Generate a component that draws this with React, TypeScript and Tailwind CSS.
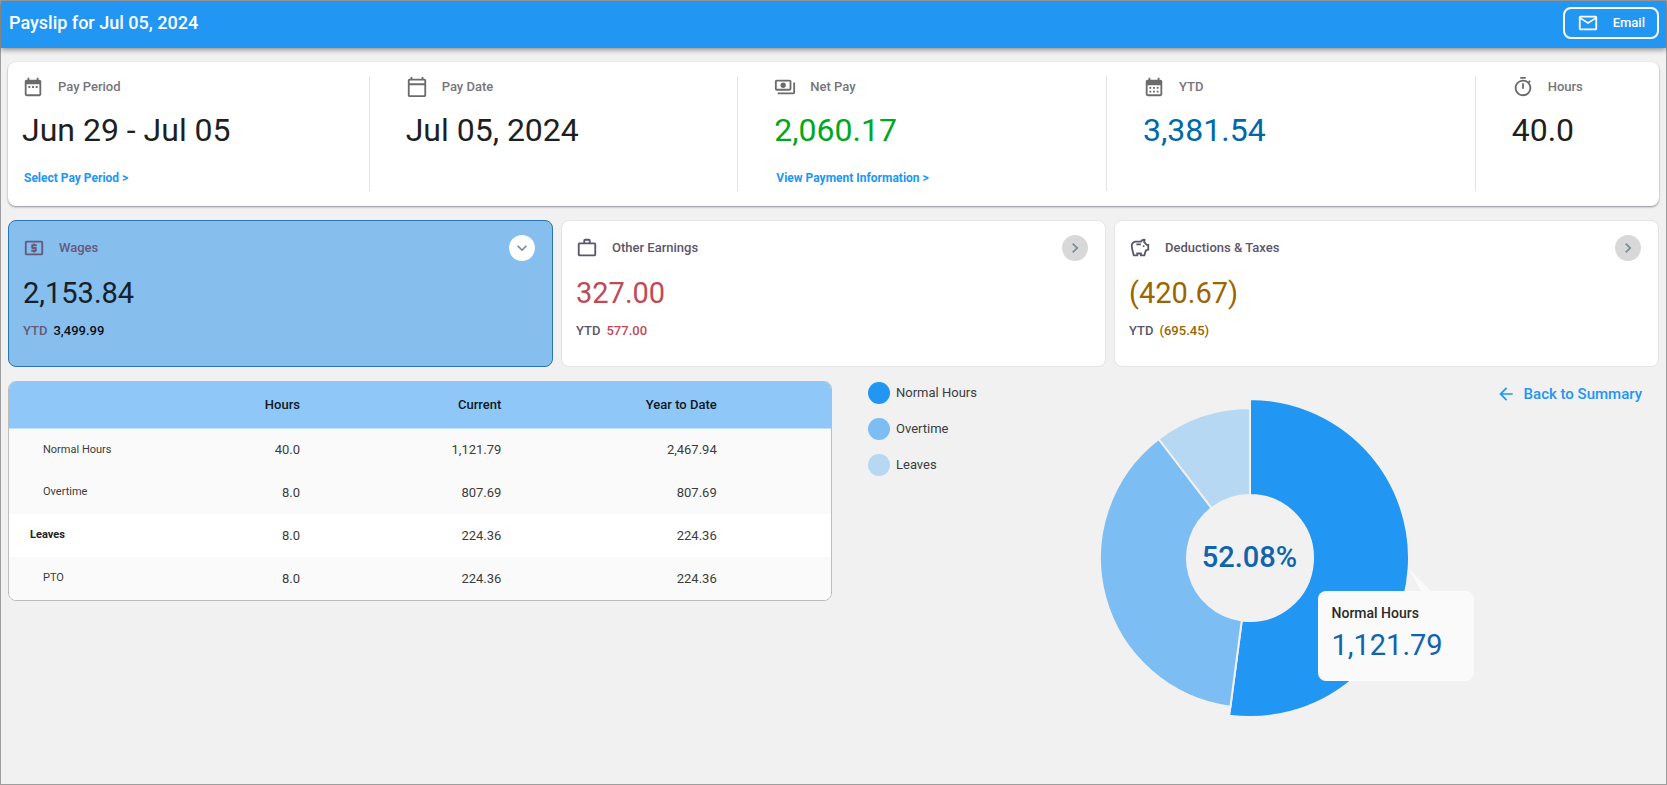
import React from 'react';
import {
  MdArrowBack,
  MdCalendarMonth,
  MdChevronRight,
  MdDateRange,
  MdExpandMore,
  MdMailOutline,
  MdOutlineCalendarToday,
  MdOutlineLocalAtm,
  MdOutlinePayments,
  MdOutlineSavings,
  MdOutlineTimer,
  MdWorkOutline
} from 'react-icons/md';

const summaryItems = [
  { icon: MdDateRange, label: 'Pay Period', value: 'Jun 29 - Jul 05', color: 'text-[#1f1f1f]', link: 'Select Pay Period >' },
  { icon: MdOutlineCalendarToday, label: 'Pay Date', value: 'Jul 05, 2024', color: 'text-[#1f1f1f]' },
  { icon: MdOutlinePayments, label: 'Net Pay', value: '2,060.17', color: 'text-[#00a81f]', link: 'View Payment Information >' },
  { icon: MdCalendarMonth, label: 'YTD', value: '3,381.54', color: 'text-[#0068a8]' },
  { icon: MdOutlineTimer, label: 'Hours', value: '40.0', color: 'text-[#1f1f1f]' }
];

const categories = [
  {
    id: 'wages',
    icon: MdOutlineLocalAtm,
    title: 'Wages',
    amount: '2,153.84',
    ytd: '3,499.99',
    amountColor: 'text-[#14202b]',
    ytdColor: 'text-[#0a0f14]'
  },
  {
    id: 'earnings',
    icon: MdWorkOutline,
    title: 'Other Earnings',
    amount: '327.00',
    ytd: '577.00',
    amountColor: 'text-[#c04a57]',
    ytdColor: 'text-[#c04a57]'
  },
  {
    id: 'deductions',
    icon: MdOutlineSavings,
    title: 'Deductions & Taxes',
    amount: '(420.67)',
    ytd: '(695.45)',
    amountColor: 'text-[#9c6500]',
    ytdColor: 'text-[#9c6500]'
  }
];

const wageRows = [
  { name: 'Normal Hours', hours: '40.0', current: '1,121.79', ytd: '2,467.94', group: false },
  { name: 'Overtime', hours: '8.0', current: '807.69', ytd: '807.69', group: false },
  { name: 'Leaves', hours: '8.0', current: '224.36', ytd: '224.36', group: true },
  { name: 'PTO', hours: '8.0', current: '224.36', ytd: '224.36', group: false }
];

const slices = [
  { name: 'Normal Hours', value: 1121.79, fill: '#2196f3', dot: 'bg-[#2196f3]', radius: 159 },
  { name: 'Overtime', value: 807.69, fill: '#7cbdf4', dot: 'bg-[#7cbdf4]', radius: 150 },
  { name: 'Leaves', value: 224.36, fill: '#b7d8f3', dot: 'bg-[#b7d8f3]', radius: 150 }
];

const INNER_RADIUS = 63;

function arcPath(start: number, end: number, outer: number) {
  const point = (angle: number, r: number) => `${r * Math.sin(angle)} ${-r * Math.cos(angle)}`;
  const large = end - start > Math.PI ? 1 : 0;
  return [
    `M${point(start, outer)}`,
    `A${outer} ${outer} 0 ${large} 1 ${point(end, outer)}`,
    `L${point(end, INNER_RADIUS)}`,
    `A${INNER_RADIUS} ${INNER_RADIUS} 0 ${large} 0 ${point(start, INNER_RADIUS)}`,
    'Z'
  ].join(' ');
}

function SummaryCard() {
  return (
    <section className="overflow-hidden rounded-lg bg-white pt-3.5 pb-[15px] shadow-[0_1px_2px_rgba(40,40,60,0.5)]">
      <div className="-ml-2 grid grid-cols-[2fr_2fr_2fr_2fr_1fr]">
        {summaryItems.map((item, index) => (
          <div
            key={item.label}
            className={`h-[115px] ${index === 0 ? 'pl-[22px]' : 'border-l border-[#e4e4e4] pl-9'}`}
          >
            <div className="flex h-[22px] items-center gap-3.5 text-[#6b6b6b]">
              <item.icon className="size-[22px]" />
              <span className="text-[13px] font-medium text-[#77747e]">{item.label}</span>
            </div>
            <p className={`mt-3 text-[32px] leading-10 ${item.color}`}>{item.value}</p>
            {item.link && (
              <a href="#" className="mt-5 ml-0.5 block text-xs font-bold text-[#2196f3]">
                {item.link}
              </a>
            )}
          </div>
        ))}
      </div>
    </section>
  );
}

type CategoryCardProps = {
  category: (typeof categories)[number];
  active: boolean;
  onSelect: () => void;
};

function CategoryCard({ category, active, onSelect }: CategoryCardProps) {
  const Chevron = active ? MdExpandMore : MdChevronRight;
  const muted = active ? 'text-[#65597a]' : 'text-[#5b566c]';

  return (
    <section
      className={`h-[147px] rounded-lg border px-3.5 pt-3.5 ${
        active ? 'border-[#2a74b3] bg-[#86beed]' : 'border-[#e4e4e4] bg-white'
      }`}
    >
      <div className={`flex items-center gap-3.5 ${muted}`}>
        <category.icon className="size-[22px]" />
        <h2 className="flex-1 text-[13px] font-medium">{category.title}</h2>
        <button
          type="button"
          onClick={onSelect}
          aria-label={`Show ${category.title}`}
          className={`mr-[3px] flex size-[26px] items-center justify-center rounded-full text-[#7b8a93] ${
            active ? 'bg-white' : 'bg-[#d8d8d8]'
          }`}
        >
          <Chevron className="size-5" />
        </button>
      </div>
      <p className={`mt-3 text-[29px] leading-10 ${category.amountColor}`}>{category.amount}</p>
      <p className={`mt-2 flex gap-1.5 text-[13px] leading-5 font-medium ${muted}`}>
        YTD <span className={category.ytdColor}>{category.ytd}</span>
      </p>
    </section>
  );
}

function WagesTable() {
  return (
    <div className="overflow-hidden rounded-lg border border-[#bdbdbd]">
      <table className="w-full table-fixed text-right text-[13px] text-[#3c3c3c]">
        <colgroup>
          <col className="w-[22.4%]" />
          <col className="w-[13%]" />
          <col className="w-[24.5%]" />
          <col className="w-[26.2%]" />
          <col />
        </colgroup>
        <thead>
          <tr className="h-[46px] border-b border-[#c4e0f8] bg-[#8fc8f8] text-[#10181f]">
            <th aria-label="Type" />
            <th className="font-medium">Hours</th>
            <th className="font-medium">Current</th>
            <th className="font-medium">Year to Date</th>
            <th aria-hidden="true" />
          </tr>
        </thead>
        <tbody>
          {wageRows.map((row) => (
            <tr key={row.name} className={`h-[43px] ${row.group ? 'bg-white' : 'bg-[#fafafa]'}`}>
              <th
                scope="row"
                className={`text-left text-[11px] ${
                  row.group ? 'pl-[21px] font-bold text-[#222222]' : 'pl-[34px] font-normal'
                }`}
              >
                {row.name}
              </th>
              <td>{row.hours}</td>
              <td>{row.current}</td>
              <td>{row.ytd}</td>
              <td />
            </tr>
          ))}
        </tbody>
      </table>
    </div>
  );
}

function Donut() {
  const total = slices.reduce((sum, slice) => sum + slice.value, 0);
  let angle = 0;

  return (
    <div className="relative mt-[17px] size-[320px]">
      <svg viewBox="-160 -160 320 320" className="size-full" role="img" aria-label="Wages breakdown">
        {slices.map((slice) => {
          const start = angle;
          angle += (slice.value / total) * Math.PI * 2;
          return (
            <path
              key={slice.name}
              d={arcPath(start, angle, slice.radius)}
              fill={slice.fill}
              stroke="#f1f1f1"
              strokeWidth="2"
            />
          );
        })}
      </svg>
      <div className="absolute inset-0 flex items-center justify-center text-[29px] font-medium text-[#0f64ad]">
        52.08%
      </div>

      {/* Tooltip */}
      <div className="absolute top-[193px] left-[228px] h-[90px] w-[156px] rounded-lg bg-[#fafafa] px-3.5 pt-3">
        <svg viewBox="0 0 24 24" className="absolute -top-[22px] left-[91px] size-6" aria-hidden="true">
          <path d="M0 0L24 24H13Z" fill="#fafafa" />
        </svg>
        <p className="text-sm font-medium text-[#2b2b2b]">Normal Hours</p>
        <p className="mt-0.5 text-[29px] leading-10 text-[#0f64ad]">1,121.79</p>
      </div>
    </div>
  );
}

export default function App() {
  const [active, setActive] = React.useState('wages');

  return (
    <div className="flex min-h-screen flex-col border border-[#9e9e9e] bg-[#f1f1f1] font-[Roboto,sans-serif]">
      <header className="flex h-[47px] items-center justify-between bg-[#2196f3] pr-[7px] pb-[3px] pl-2 text-white shadow-[0_2px_5px_rgba(0,0,0,0.4)]">
        <h1 className="text-lg font-medium">Payslip for Jul 05, 2024</h1>
        <button
          type="button"
          className="flex h-8 items-center gap-3.5 rounded-lg border-2 border-white px-3 text-[13px] font-medium"
        >
          <MdMailOutline className="size-[22px]" />
          Email
        </button>
      </header>

      <main className="flex flex-col gap-3.5 px-[7px] pt-3.5">
        <SummaryCard />

        <div className="grid grid-cols-3 gap-2">
          {categories.map((category) => (
            <CategoryCard
              key={category.id}
              category={category}
              active={active === category.id}
              onSelect={() => setActive(category.id)}
            />
          ))}
        </div>

        <div className="grid grid-cols-[824fr_819fr] items-start gap-2">
          <WagesTable />

          <div className="grid grid-cols-[1fr_auto_1fr] items-start">
            <ul className="flex flex-col gap-3.5 pt-px pl-7">
              {slices.map((slice) => (
                <li key={slice.name} className="flex h-[22px] items-center gap-1.5 text-[13px] text-[#3c3c3c]">
                  <span className={`size-[22px] rounded-full ${slice.dot}`} />
                  {slice.name}
                </li>
              ))}
            </ul>
            <Donut />
            <button
              type="button"
              className="mt-0.5 mr-[17px] flex items-center gap-2 justify-self-end text-[15px] font-medium text-[#2196f3]"
            >
              <MdArrowBack className="size-5" />
              Back to Summary
            </button>
          </div>
        </div>
      </main>
    </div>
  );
}
